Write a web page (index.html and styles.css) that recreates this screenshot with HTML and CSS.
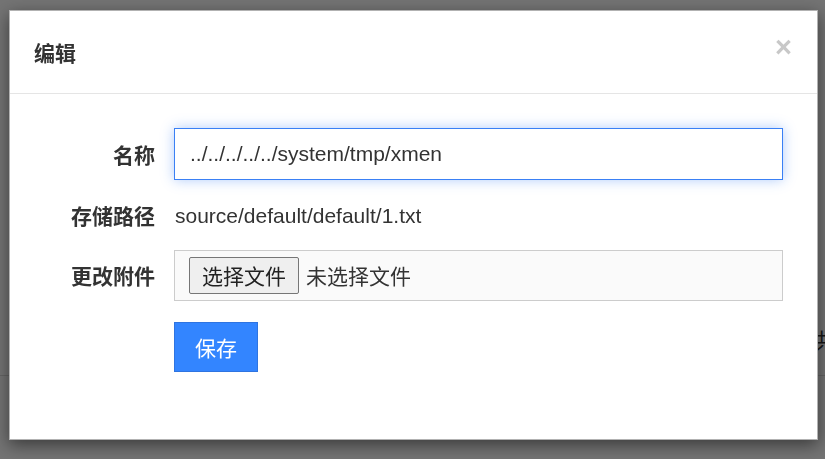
FILE: index.html
```html
<!DOCTYPE html>
<html lang="zh-CN">
<head>
<meta charset="utf-8">
<title>编辑</title>
<link rel="stylesheet" href="styles.css">
</head>
<body>
<div class="page">
  <div class="page-row"><span class="page-cell">共</span></div>
</div>
<div class="backdrop"></div>
<div class="modal">
  <div class="modal-header">
    <h4 class="modal-title">编辑</h4>
    <span class="close">×</span>
  </div>
  <form class="modal-body">
    <label class="label">名称</label>
    <input class="input" type="text" value="../../../../../system/tmp/xmen">
    <label class="label">存储路径</label>
    <div class="static">source/default/default/1.txt</div>
    <label class="label">更改附件</label>
    <div class="filebox"><span class="file-btn">选择文件</span><span class="file-name">未选择文件</span></div>
    <div></div>
    <div><button class="btn-save" type="button">保存</button></div>
  </form>
</div>
</body>
</html>
```
FILE: styles.css
```css
html, body {
  margin: 0;
  padding: 0;
  width: 825px;
  height: 459px;
  overflow: hidden;
  background: #fff;
  font-family: "Liberation Sans", "Noto Sans CJK SC", sans-serif;
  color: #333;
}
.page {
  padding-top: 322px;
}
.page-row {
  height: 53px;
  border-bottom: 1px solid #ddd;
  display: flex;
  white-space: nowrap;
}
.page-cell {
  margin-left: 815px;
  margin-top: 2px;
  font-size: 21px;
  color: #333;
  font-family: "Noto Sans CJK SC", sans-serif;
}
.backdrop {
  position: fixed;
  inset: 0;
  background: rgba(0, 0, 0, 0.55);
}
.modal {
  position: fixed;
  top: 10px;
  left: 9px;
  width: 809px;
  height: 430px;
  box-sizing: border-box;
  background: #fff;
  border: 1px solid rgba(0, 0, 0, 0.3);
  box-shadow: 0 5px 16px rgba(0, 0, 0, 0.5);
}
.modal-header {
  height: 82px;
  border-bottom: 1px solid #e5e5e5;
  display: flex;
  align-items: center;
  justify-content: space-between;
  padding: 0 25px 0 24px;
}
.modal-title {
  margin: 0;
  font-size: 21px;
  line-height: 1;
  font-weight: bold;
  color: #333;
  font-family: "Noto Sans CJK SC", sans-serif;
}
.close {
  font-size: 29px;
  font-weight: bold;
  line-height: 1;
  color: #c8c8c8;
  margin-bottom: 9px;
}
.modal-body {
  margin: 0;
  padding: 34px 34px 0 0;
  display: grid;
  grid-template-columns: 145px 1fr;
  column-gap: 19px;
  row-gap: 19px;
  grid-template-rows: 52px 32px 51px 50px;
}
.modal-body > :nth-child(7),
.modal-body > :nth-child(8) {
  margin-top: 2px;
}
.label {
  display: flex;
  align-items: center;
  justify-content: flex-end;
  font-size: 21px;
  line-height: 1;
  font-weight: bold;
  color: #333;
  font-family: "Noto Sans CJK SC", sans-serif;
}
.input {
  box-sizing: border-box;
  height: 52px;
  width: 100%;
  margin: 0;
  padding: 0 15px;
  font: 21px "Liberation Sans", "Noto Sans CJK SC", sans-serif;
  color: #333;
  border: 1px solid #3a80f5;
  outline: none;
  border-radius: 0;
  box-shadow: 0 0 12px rgba(58, 128, 245, 0.4);
}
.static {
  display: flex;
  align-items: center;
  font-size: 21px;
  line-height: 1;
  color: #333;
  padding-left: 1px;
}
.filebox {
  box-sizing: border-box;
  height: 51px;
  border: 1px solid #ccc;
  background: #fafafa;
  display: flex;
  align-items: center;
  padding-left: 14px;
  gap: 7px;
  font-family: "Noto Sans CJK SC", sans-serif;
  font-size: 21px;
  color: #333;
}
.file-btn {
  box-sizing: border-box;
  height: 37px;
  display: flex;
  align-items: center;
  padding: 0 12px;
  border: 1px solid #767676;
  border-radius: 2px;
  background: #efefef;
  line-height: 1;
  color: #222;
}
.file-name {
  line-height: 1;
}
.btn-save {
  box-sizing: border-box;
  width: 84px;
  height: 50px;
  margin: 0;
  padding: 0;
  background: #3385ff;
  border: 1px solid #2f74e0;
  border-radius: 0;
  color: #fff;
  font: 21px "Noto Sans CJK SC", sans-serif;
  line-height: 1;
}
```
